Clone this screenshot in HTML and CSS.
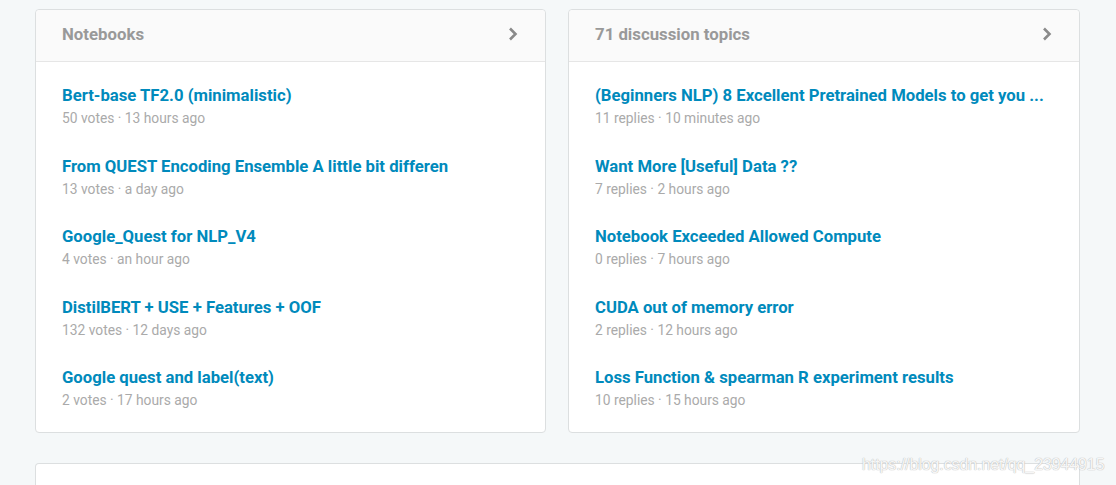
FILE: index.html
```html
<!DOCTYPE html>
<html>
<head>
<meta charset="utf-8">
<link rel="stylesheet" href="styles.css">
</head>
<body>
<div class="page">
  <div class="row">
    <section class="card">
      <header class="card-head">
        <span class="card-title">Notebooks</span>
        <svg class="chev" width="10" height="14" viewBox="0 0 10 14"><path d="M2 1.5 L7.5 7 L2 12.5" fill="none" stroke="#8a8a8a" stroke-width="2.6"/></svg>
      </header>
      <ul class="list">
        <li><a class="item-title">Bert-base TF2.0 (minimalistic)</a><div class="meta">50 votes · 13 hours ago</div></li>
        <li><a class="item-title">From QUEST Encoding Ensemble A little bit differen</a><div class="meta">13 votes · a day ago</div></li>
        <li><a class="item-title">Google_Quest for NLP_V4</a><div class="meta">4 votes · an hour ago</div></li>
        <li><a class="item-title">DistilBERT + USE + Features + OOF</a><div class="meta">132 votes · 12 days ago</div></li>
        <li><a class="item-title">Google quest and label(text)</a><div class="meta">2 votes · 17 hours ago</div></li>
      </ul>
    </section>
    <section class="card">
      <header class="card-head">
        <span class="card-title">71 discussion topics</span>
        <svg class="chev" width="10" height="14" viewBox="0 0 10 14"><path d="M2 1.5 L7.5 7 L2 12.5" fill="none" stroke="#8a8a8a" stroke-width="2.6"/></svg>
      </header>
      <ul class="list">
        <li><a class="item-title">(Beginners NLP) 8 Excellent Pretrained Models to get you ...</a><div class="meta">11 replies · 10 minutes ago</div></li>
        <li><a class="item-title">Want More [Useful] Data ??</a><div class="meta">7 replies · 2 hours ago</div></li>
        <li><a class="item-title">Notebook Exceeded Allowed Compute</a><div class="meta">0 replies · 7 hours ago</div></li>
        <li><a class="item-title">CUDA out of memory error</a><div class="meta">2 replies · 12 hours ago</div></li>
        <li><a class="item-title">Loss Function &amp; spearman R experiment results</a><div class="meta">10 replies · 15 hours ago</div></li>
      </ul>
    </section>
  </div>
  <section class="card wide"></section>
</div>
<div class="watermark">https://blog.csdn.net/qq_23944915</div>
</body>
</html>
```

FILE: styles.css
```css
html, body {
  margin: 0;
  padding: 0;
  background: #f5f8f9;
  font-family: Roboto, "Liberation Sans", sans-serif;
  overflow: hidden;
}
body {
  height: 485px;
  position: relative;
}
.page {
  width: 1045px;
  margin-left: 35px;
  padding-top: 9px;
  display: flex;
  flex-direction: column;
  gap: 30px;
}
.row {
  display: grid;
  grid-template-columns: 511px 512px;
  gap: 22px;
}
.card {
  background: #fff;
  border: 1px solid #dcdfe0;
  border-radius: 4px;
  box-sizing: border-box;
}
.card-head {
  height: 52px;
  box-sizing: border-box;
  background: #fafafa;
  border-bottom: 1px solid #e6e6e6;
  border-radius: 4px 4px 0 0;
  display: flex;
  align-items: center;
  justify-content: space-between;
  padding: 0 27px 3px 26px;
}
.card-title {
  font-size: 16.8px;
  font-weight: 700;
  color: #999;
}
.chev { display: block; }
.list {
  list-style: none;
  margin: 0;
  padding: 22px 26px 22px;
  display: flex;
  flex-direction: column;
  gap: 26.5px;
}
.list li { display: block; }
.item-title {
  display: block;
  font-size: 16.7px;
  line-height: 24px;
  font-weight: 700;
  color: #008abc;
  white-space: nowrap;
}
.meta {
  font-size: 13.8px;
  line-height: 20px;
  color: #aaa;
}
.wide {
  height: 22px;
  border-bottom: none;
  border-radius: 4px 4px 0 0;
}
.watermark {
  position: absolute;
  left: 862px;
  top: 456px;
  font-family: "Liberation Sans", Arial, sans-serif;
  font-size: 15.8px;
  color: rgba(255,255,255,0.9);
  text-shadow: 0 0 1px #bbb, 0 0 1px #bbb;
}
```
